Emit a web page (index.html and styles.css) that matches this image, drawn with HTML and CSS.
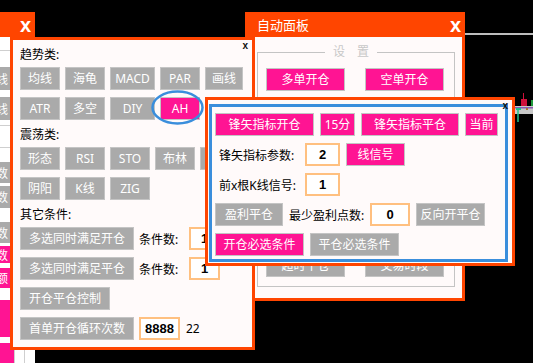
FILE: index.html
```html
<!DOCTYPE html>
<html lang="zh-CN">
<head>
    <meta charset="UTF-8">
    <meta name="viewport" content="width=device-width, initial-scale=1.0">
    <title>自动面板</title>
    <link rel="stylesheet" href="styles.css">
</head>
<body>
    <div class="desk">
        <div class="axis-line"></div>
        <svg class="mini-chart" width="18" height="34" viewBox="0 0 18 34">
            <line x1="8.5" y1="3" x2="8.5" y2="9" stroke="#d0103a" stroke-width="1"/>
            <rect x="6" y="9" width="6" height="8" fill="#d0103a"/>
            <rect x="16" y="10" width="2" height="7" fill="#1f9a3c"/>
            <rect x="0" y="16" width="18" height="8" fill="#c8c8c8"/>
            <rect x="0" y="17" width="18" height="1.5" fill="#8a5ab0"/>
            <rect x="1" y="18" width="5" height="2" fill="#20c08a"/>
            <line x1="3" y1="18" x2="3" y2="32" stroke="#20c08a" stroke-width="1.5"/>
            <rect x="11" y="18" width="2" height="2" fill="#b07030"/>
        </svg>

        <!-- side panel, mostly hidden -->
        <div class="win win-side">
            <div class="titlebar"><span class="close">x</span></div>
            <div class="side-body">
                <div class="side-col">
                    <div class="side-sep m13"></div>
                    <div class="side-btn gray m16 h23">画线</div>
                    <div class="side-btn gray m7 h23">均线</div>
                    <div class="side-sep m5"></div>
                    <div class="side-sep m21"></div>
                    <div class="side-btn gray m14 h21">参数</div>
                    <div class="side-btn gray m3 h22">参数</div>
                    <div class="side-btn gray m14 h21">参数</div>
                    <div class="side-btn pink m3 h17">参数</div>
                    <div class="side-btn pink m5 h20">金额</div>
                    <div class="side-btn pink m12 h37"></div>
                    <div class="side-btn pink m6 h40"></div>
                </div>
                <div class="side-rail"><span></span><span></span></div>
            </div>
        </div>

        <!-- 自动面板 -->
        <div class="win win-auto">
            <div class="titlebar"><span class="title">自动面板</span><span class="close">x</span></div>
            <div class="auto-body">
                <fieldset class="setgroup">
                    <legend>设&emsp;置</legend>
                    <div class="set-row">
                        <button class="btn pink w79">多单开仓</button>
                        <button class="btn pink w79">空单开仓</button>
                    </div>
                    <div class="set-row">
                        <button class="btn gray w79">超时平仓</button>
                        <button class="btn gray w79">交易时段</button>
                    </div>
                </fieldset>
            </div>
        </div>

        <!-- 指标选择 -->
        <div class="win win-trend">
            <span class="mini-close">x</span>
            <div class="sec-label first">趋势类:</div>
            <div class="btn-row">
                <button class="btn gray">均线</button>
                <button class="btn gray">海龟</button>
                <button class="btn gray w45">MACD</button>
                <button class="btn gray">PAR</button>
                <button class="btn gray w38">画线</button>
            </div>
            <div class="btn-row">
                <button class="btn gray">ATR</button>
                <button class="btn gray">多空</button>
                <button class="btn gray w45">DIY</button>
                <button class="btn pink">AH</button>
            </div>
            <div class="sec-label">震荡类:</div>
            <div class="btn-row">
                <button class="btn gray">形态</button>
                <button class="btn gray">RSI</button>
                <button class="btn gray">STO</button>
                <button class="btn gray">布林</button>
                <button class="btn gray">CCI</button>
            </div>
            <div class="btn-row">
                <button class="btn gray">阴阳</button>
                <button class="btn gray">K线</button>
                <button class="btn gray">ZIG</button>
            </div>
            <div class="sec-label">其它条件:</div>
            <div class="btn-row">
                <button class="btn gray w114">多选同时满足开仓</button>
                <span class="field-label w45">条件数:</span>
                <span class="num w31">1</span>
            </div>
            <div class="btn-row">
                <button class="btn gray w114">多选同时满足平仓</button>
                <span class="field-label w45">条件数:</span>
                <span class="num w31">1</span>
            </div>
            <div class="btn-row">
                <button class="btn gray w90">开仓平仓控制</button>
            </div>
            <div class="btn-row">
                <button class="btn gray w114">首单开仓循环次数</button>
                <span class="num w41">8888</span>
                <span class="plain">22</span>
            </div>
            <svg class="mark-ring" width="53" height="35" viewBox="0 0 53 35">
                <ellipse cx="26.5" cy="17.5" rx="25" ry="16" fill="none" stroke="#3a8edc" stroke-width="2.5"/>
            </svg>
        </div>

        <!-- 锋矢指标 -->
        <div class="win win-signal">
            <span class="mini-close">x</span>
            <div class="signal-box">
                <div class="sig-row">
                    <button class="btn pink w99">锋矢指标开仓</button>
                    <button class="btn pink w35">15分</button>
                    <button class="btn pink w98">锋矢指标平仓</button>
                    <button class="btn pink w33">当前</button>
                </div>
                <div class="sig-row">
                    <span class="field-label pad w84">锋矢指标参数:</span>
                    <span class="num w35">2</span>
                    <button class="btn pink w59">线信号</button>
                </div>
                <div class="sig-row">
                    <span class="field-label pad w84">前x根K线信号:</span>
                    <span class="num w35">1</span>
                </div>
                <div class="sig-row">
                    <button class="btn gray w68">盈利平仓</button>
                    <span class="field-label w75">最少盈利点数:</span>
                    <span class="num w40">0</span>
                    <button class="btn gray w69">反向开平仓</button>
                </div>
                <div class="sig-row">
                    <button class="btn pink w89">开仓必选条件</button>
                    <button class="btn gray w89">平仓必选条件</button>
                </div>
            </div>
        </div>
    </div>
</body>
</html>
```

FILE: styles.css
```css
* {
    box-sizing: border-box;
}
body {
    margin: 0;
    background-color: #000;
    font-family: "Noto Sans", "Noto Sans CJK SC", sans-serif;
    font-size: 12px;
    color: #000;
}
.desk {
    position: relative;
    width: 533px;
    height: 363px;
    overflow: hidden;
}
.axis-line {
    position: absolute;
    left: 465px;
    top: 33px;
    width: 68px;
    height: 2px;
    background-color: #bdbdbd;
}
.mini-chart {
    position: absolute;
    left: 515px;
    top: 90px;
}

/* windows */
.win {
    position: absolute;
    display: flex;
    flex-direction: column;
    background-color: #fffafa;
    border: 3px solid #ff4500;
}
.titlebar {
    flex: none;
    height: 25px;
    display: flex;
    align-items: center;
    justify-content: space-between;
    background-color: #ff4500;
    color: #fff;
}
.titlebar .title {
    font-size: 13px;
}
.close {
    font-family: "Liberation Sans", Arial, sans-serif;
    font-weight: bold;
    font-size: 20px;
    line-height: 20px;
}
.mini-close {
    position: absolute;
    top: 1px;
    right: 4px;
    font-family: "Liberation Sans", Arial, sans-serif;
    font-weight: bold;
    font-size: 10px;
    line-height: 10px;
    color: #111;
}

/* buttons and fields */
.btn {
    flex: none;
    width: 40px;
    height: 23px;
    padding: 0;
    border: 1px solid #c4c4c4;
    color: #fff;
    font-family: inherit;
    font-size: 12px;
    line-height: 21px;
    text-align: center;
    white-space: nowrap;
}
.btn.gray {
    background-color: #aaa;
}
.btn.pink {
    background-color: #ff1493;
}
.field-label {
    flex: none;
    white-space: nowrap;
}
.field-label.pad {
    padding-left: 4px;
}
.num {
    flex: none;
    display: flex;
    align-items: center;
    justify-content: center;
    height: 23px;
    border: 2px solid #ffc080;
    background-color: #fff;
    font-family: "Liberation Sans", Arial, sans-serif;
    font-weight: bold;
    font-size: 13px;
}
.plain {
    margin-left: 1px;
}
.w31 { width: 31px; }
.w33 { width: 33px; }
.w35 { width: 35px; }
.w38 { width: 38px; }
.w40 { width: 40px; }
.w41 { width: 41px; }
.w45 { width: 45px; }
.w59 { width: 59px; }
.w68 { width: 68px; }
.w69 { width: 69px; }
.w75 { width: 75px; }
.w79 { width: 79px; }
.w84 { width: 84px; }
.w89 { width: 89px; }
.w90 { width: 90px; }
.w98 { width: 98px; }
.w99 { width: 99px; }
.w114 { width: 114px; }

/* side panel */
.win-side {
    left: -65px;
    top: 12px;
    width: 100px;
    height: 360px;
    border: 0;
    background-color: #fff;
}
.win-side .titlebar {
    justify-content: flex-end;
    padding-right: 4px;
}
.side-body {
    flex: 1;
    display: flex;
}
.side-col {
    width: 79px;
    display: flex;
    flex-direction: column;
}
.side-rail {
    flex: 1;
    display: flex;
}
.side-rail span {
    width: 10px;
    border-left: 1px solid #cfcfcf;
}
.side-sep {
    flex: none;
    height: 1px;
    background-color: #cfcfcf;
}
.side-btn {
    flex: none;
    display: flex;
    align-items: center;
    justify-content: flex-end;
    padding-right: 6px;
    color: #fff;
}
.side-btn.gray {
    background-color: #aaa;
}
.side-btn.pink {
    background-color: #ff1493;
}
.m3 { margin-top: 3px; }
.m5 { margin-top: 5px; }
.m6 { margin-top: 6px; }
.m7 { margin-top: 7px; }
.m12 { margin-top: 12px; }
.m13 { margin-top: 13px; }
.m14 { margin-top: 14px; }
.m16 { margin-top: 16px; }
.m21 { margin-top: 21px; }
.h17 { height: 17px; }
.h20 { height: 20px; }
.h21 { height: 21px; }
.h22 { height: 22px; }
.h23 { height: 23px; }
.h37 { height: 37px; }
.h40 { height: 40px; }

/* auto panel */
.win-auto {
    left: 245px;
    top: 12px;
    width: 220px;
    height: 289px;
    border-top: 0;
}
.win-auto .titlebar {
    padding: 0 1px 0 9px;
}
.auto-body {
    flex: 1;
    display: flex;
    flex-direction: column;
    padding: 8px 7px 11px 9px;
}
.setgroup {
    flex: 1;
    margin: 0;
    min-width: 0;
    display: flex;
    flex-direction: column;
    justify-content: space-between;
    border: 1px solid #c4c4c4;
    padding: 9px 9px 9px 8px;
}
.setgroup legend {
    margin-left: 59px;
    padding: 0 8px;
    color: #c8c8c8;
    font-size: 12px;
    line-height: 14px;
}
.set-row {
    display: flex;
    gap: 20px;
}

/* trend window */
.win-trend {
    left: 10px;
    top: 37px;
    width: 245px;
    height: 313px;
    padding: 5px 0 0 7px;
}
.sec-label {
    height: 20px;
    line-height: 20px;
    margin-top: 5px;
}
.sec-label.first {
    margin-top: 0;
}
.btn-row {
    display: flex;
    align-items: center;
    gap: 5px;
    margin-top: 7px;
}
.sec-label + .btn-row {
    margin-top: 2px;
}
.mark-ring {
    position: absolute;
    left: 138px;
    top: 50px;
}

/* signal window */
.win-signal {
    left: 205px;
    top: 97px;
    width: 310px;
    height: 169px;
}
.signal-box {
    flex: 1;
    display: flex;
    flex-direction: column;
    gap: 7px;
    margin: 4px 4px 1px 1px;
    border: 3px solid #3a8edc;
    padding: 6px 0 0 3px;
}
.sig-row {
    display: flex;
    align-items: center;
    gap: 6px;
    height: 23px;
}
```
